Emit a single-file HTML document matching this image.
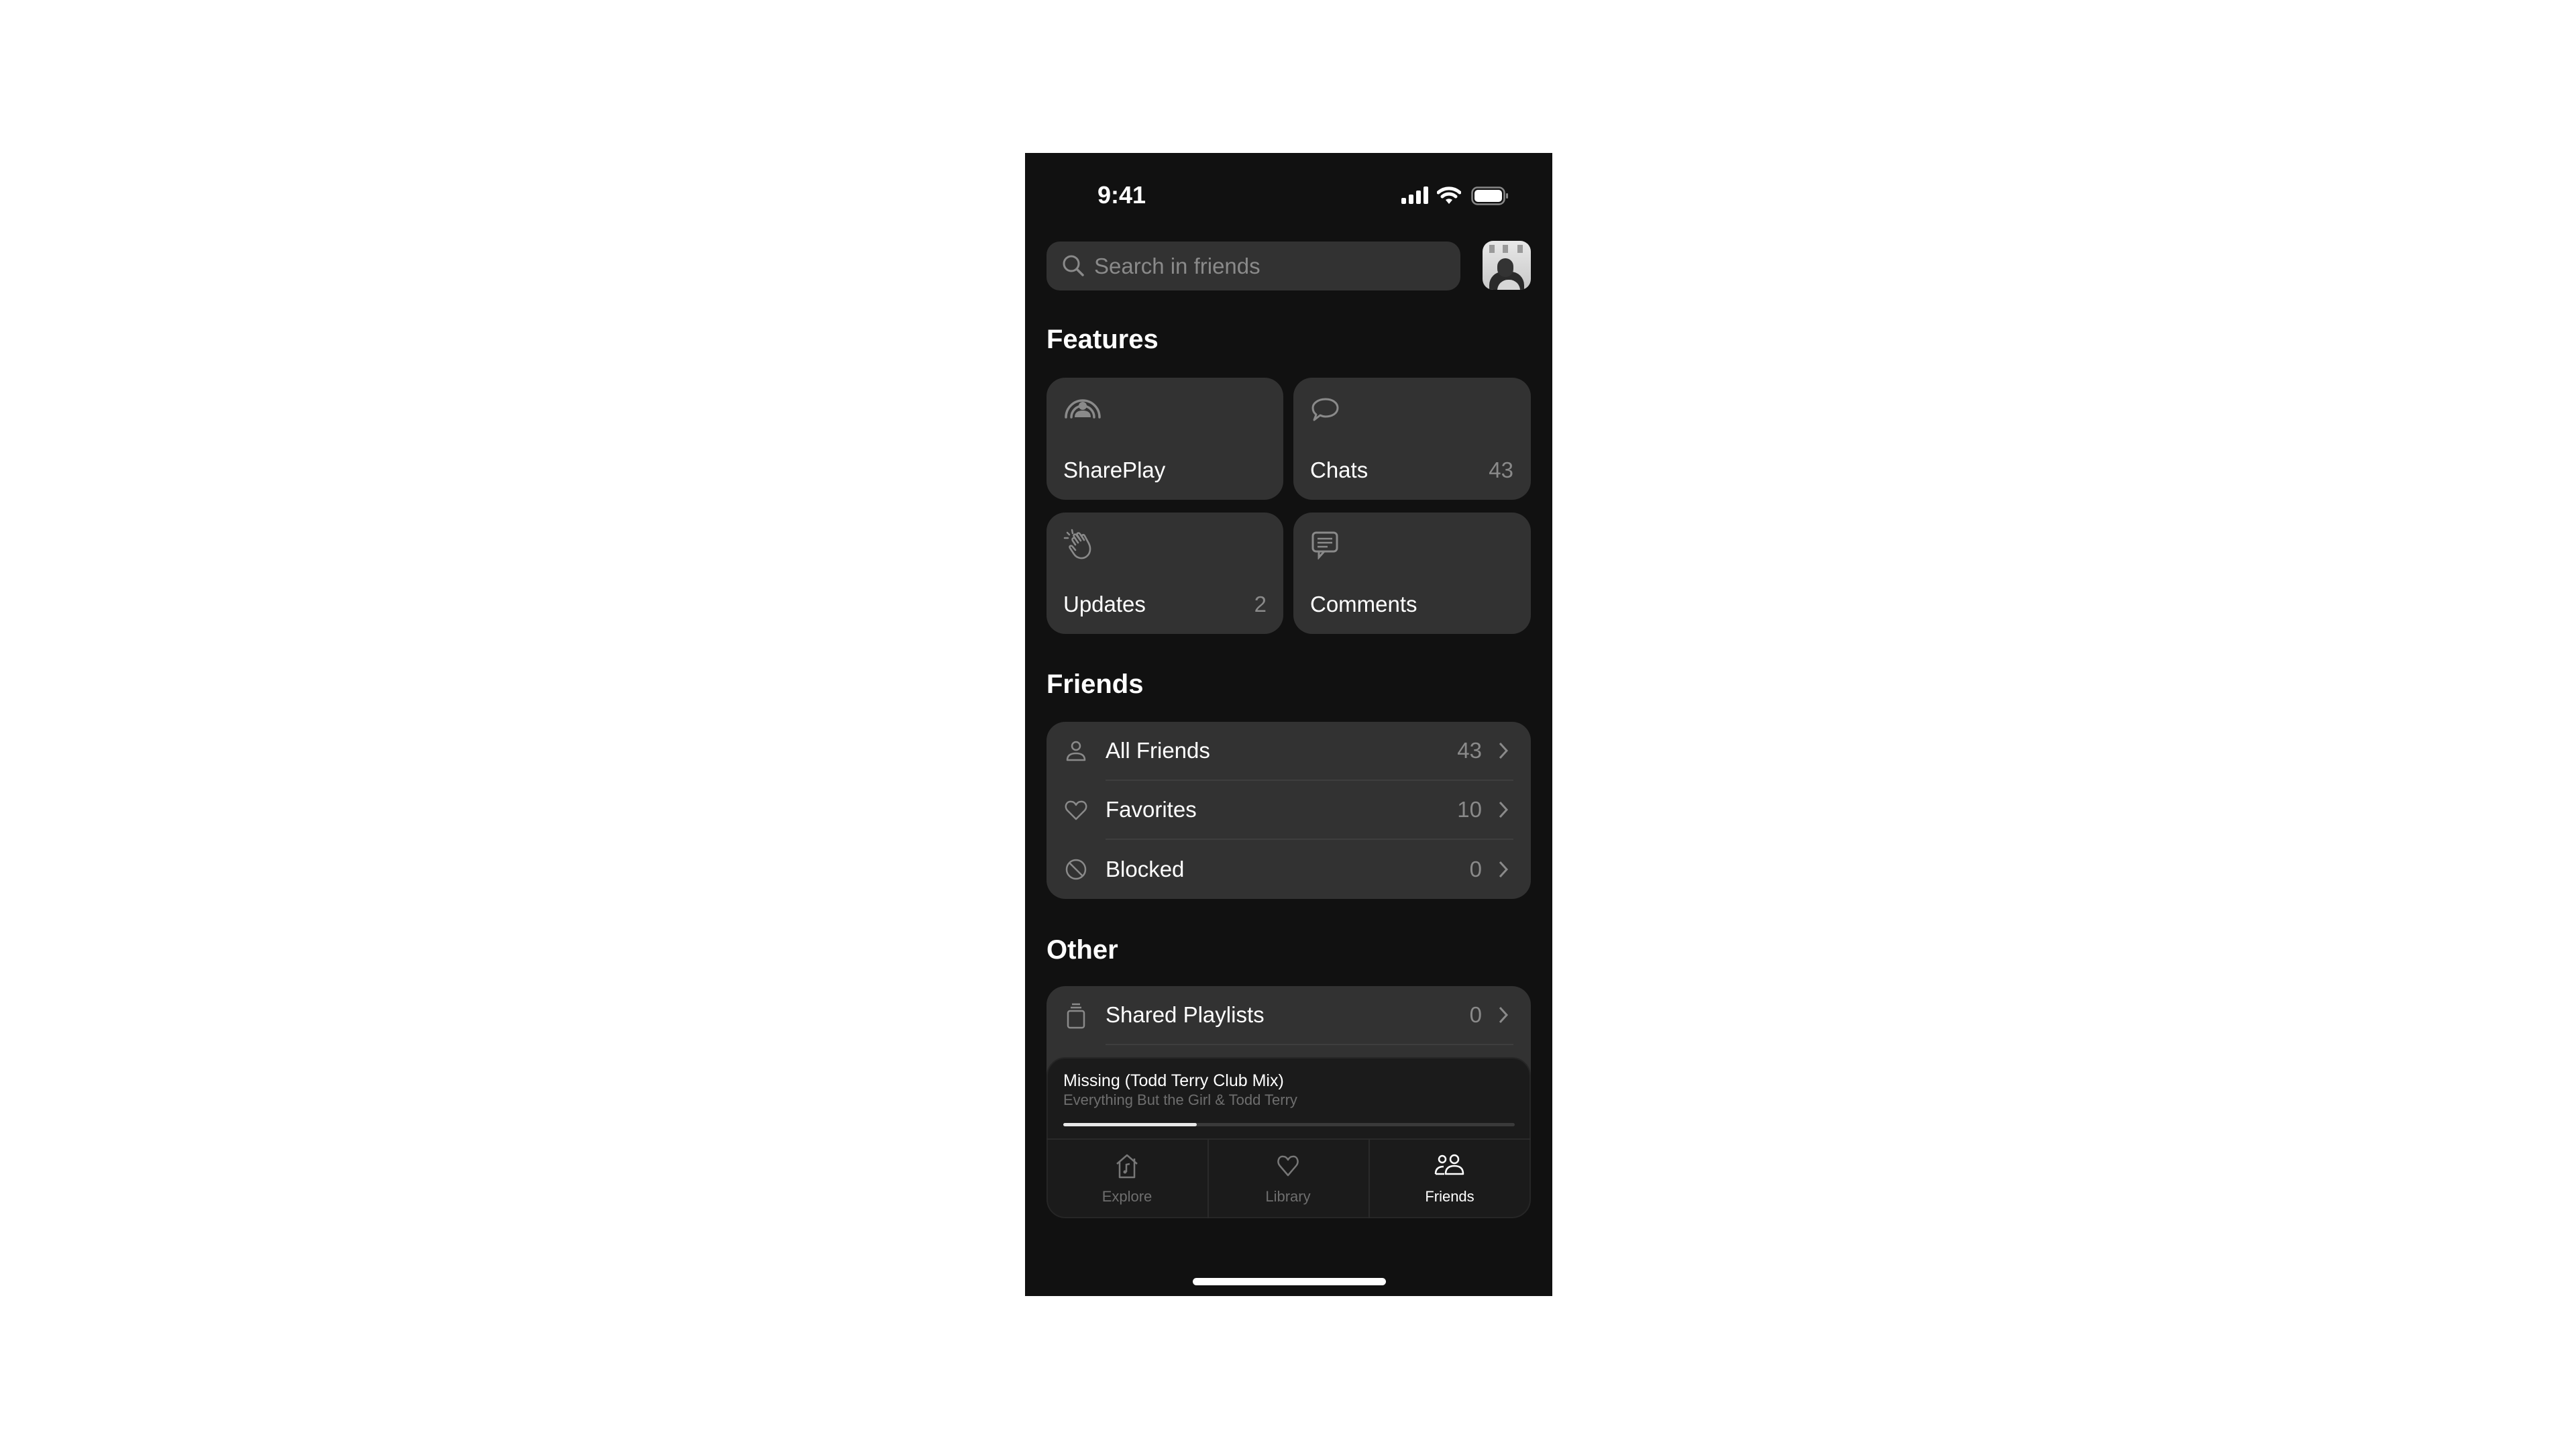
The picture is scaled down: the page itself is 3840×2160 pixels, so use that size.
<!DOCTYPE html>
<html><head><meta charset="utf-8"><style>
*{margin:0;padding:0;box-sizing:border-box}
body{width:3840px;height:2160px;background:#fff;position:relative;overflow:hidden;font-family:"Liberation Sans",sans-serif}
.ph{position:absolute;left:1528px;top:228px;width:786px;height:1704px;background:#111;overflow:hidden}
.a{position:absolute}
.t{position:absolute;white-space:nowrap;line-height:1}
.card{position:absolute;background:#323232;border-radius:28px}
.h{font-size:40px;font-weight:bold;color:#fff;left:32px}
.lbl{font-size:33px;color:#fff}
.cnt{font-size:33px;color:#8a8a8a}
.sep{position:absolute;height:2px;background:#3e3e3e}
</style></head><body>
<div class="ph">
 <div class="t" style="left:108px;top:45px;font-size:36px;font-weight:bold;color:#fff">9:41</div>
 <svg class="a" style="left:561px;top:50px" width="40" height="26"><rect x="0" y="17" width="7" height="9" rx="2" fill="#fff"/><rect x="11" y="12" width="7" height="14" rx="2" fill="#fff"/><rect x="22" y="6" width="7" height="20" rx="2" fill="#fff"/><rect x="33" y="0" width="7" height="26" rx="2" fill="#fff"/></svg>
 <svg class="a" style="left:614px;top:49px" width="36" height="28" viewBox="0 0 36 28"><path d="M2 10 A24 24 0 0 1 34 10" stroke="#fff" stroke-width="5" fill="none" stroke-linecap="round"/><path d="M8 16 A15 15 0 0 1 28 16" stroke="#fff" stroke-width="5" fill="none" stroke-linecap="round"/><path d="M13 21 L18 27 L23 21 A8 8 0 0 0 13 21Z" fill="#fff"/></svg>
 <svg class="a" style="left:665px;top:50px" width="56" height="28"><rect x="1.5" y="1.5" width="48" height="25" rx="8" stroke="#888" stroke-width="2.5" fill="none"/><rect x="5" y="5" width="41" height="18" rx="5" fill="#fff"/><rect x="52" y="10" width="3" height="8" rx="1.5" fill="#888"/></svg>
 <div class="card" style="left:32px;top:132px;width:617px;height:73px;border-radius:20px"></div>
 <svg class="a" style="left:54px;top:150px" width="36" height="36" viewBox="0 0 36 36"><circle cx="15" cy="15" r="11" stroke="#8a8a8a" stroke-width="3" fill="none"/><path d="M23 23 L32 32" stroke="#8a8a8a" stroke-width="3.5" stroke-linecap="round"/></svg>
 <div class="t" style="left:103px;top:152px;font-size:33px;color:#8a8a8a">Search in friends</div>
 <div class="a" style="left:682px;top:131px;width:72px;height:73px;border-radius:16px;overflow:hidden;background:linear-gradient(#e8e8e8,#c8c8c8)">
  <div class="a" style="left:10px;top:6px;width:8px;height:12px;background:#9a9a9a"></div>
  <div class="a" style="left:30px;top:6px;width:8px;height:12px;background:#9a9a9a"></div>
  <div class="a" style="left:52px;top:6px;width:8px;height:12px;background:#9a9a9a"></div>
  <div class="a" style="left:10px;top:46px;width:52px;height:34px;border-radius:20px 20px 0 0;background:#2a2a2a"></div>
  <div class="a" style="left:22px;top:58px;width:34px;height:20px;border-radius:16px 16px 0 0;background:#d6d6d6"></div>
  <div class="a" style="left:22px;top:26px;width:24px;height:28px;border-radius:12px;background:#333"></div>
 </div>
 <div class="t h" style="top:258px">Features</div>
 <div class="card" style="left:32px;top:335px;width:353px;height:182px"></div>
 <div class="card" style="left:400px;top:335px;width:354px;height:182px"></div>
 <div class="card" style="left:32px;top:536px;width:353px;height:181px"></div>
 <div class="card" style="left:400px;top:536px;width:354px;height:181px"></div>
 <svg class="a" style="left:58px;top:362px" width="56" height="34" viewBox="0 0 56 34"><path d="M3 32 A25 25 0 0 1 53 32" stroke="#8a8a8a" stroke-width="3.5" fill="none" stroke-linecap="round"/><path d="M11 32 A17 17 0 0 1 45 32" stroke="#8a8a8a" stroke-width="3.5" fill="none" stroke-linecap="round"/><circle cx="28" cy="15" r="6" fill="#8a8a8a"/><path d="M16 32 Q16 22 28 22 Q40 22 40 32Z" fill="#8a8a8a"/></svg>
 <svg class="a" style="left:426px;top:364px" width="44" height="40" viewBox="0 0 44 40"><path d="M22 3 C33 3 40 9 40 16 C40 24 32 29 22 29 C19 29 16 28 14 27 L5 34 L8 26 C4 23 3 19 3 16 C3 9 11 3 22 3Z" stroke="#8a8a8a" stroke-width="3" fill="none" stroke-linejoin="round"/></svg>
 <svg class="a" style="left:57px;top:560px" width="52" height="48" viewBox="0 0 52 48"><path d="M6 6 L9 9 M13 2 L14 7 M2 14 L7 14" stroke="#8a8a8a" stroke-width="2.5" stroke-linecap="round"/><path d="M18 24 L14 18 C12 15 16 12 18 15 L22 21 M22 21 L16 12 C14 9 18 7 20 10 L26 18 M26 18 L21 10 C19 7 23 5 25 8 L31 17 M31 17 L28 12 C27 9 31 8 32 11 L38 22 C42 30 40 38 34 42 C28 46 20 44 16 38 L10 29 C8 26 12 24 14 27 L18 32" stroke="#8a8a8a" stroke-width="2.6" fill="none" stroke-linecap="round" stroke-linejoin="round"/></svg>
 <svg class="a" style="left:427px;top:564px" width="42" height="42" viewBox="0 0 42 42"><rect x="2" y="2" width="36" height="28" rx="5" stroke="#8a8a8a" stroke-width="3" fill="none"/><path d="M9 11 H31 M9 17 H31 M9 23 H24" stroke="#8a8a8a" stroke-width="2.5"/><path d="M11 30 L11 39 L19 30" stroke="#8a8a8a" stroke-width="3" fill="none"/></svg>
 <div class="t lbl" style="left:57px;top:456px">SharePlay</div>
 <div class="t lbl" style="left:425px;top:456px">Chats</div>
 <div class="t cnt" style="right:58px;top:456px">43</div>
 <div class="t lbl" style="left:57px;top:656px">Updates</div>
 <div class="t cnt" style="right:426px;top:656px">2</div>
 <div class="t lbl" style="left:425px;top:656px">Comments</div>
 <div class="t h" style="top:772px">Friends</div>
 <div class="card" style="left:32px;top:848px;width:722px;height:264px"></div>
 <div class="sep" style="left:120px;top:934px;width:608px"></div>
 <div class="sep" style="left:120px;top:1022px;width:608px"></div>
 <svg class="a" style="left:58px;top:874px" width="36" height="36" viewBox="0 0 36 36"><circle cx="18" cy="10" r="6" stroke="#8a8a8a" stroke-width="2.5" fill="none"/><path d="M5 31 Q5 21 18 21 Q31 21 31 31 Z" stroke="#8a8a8a" stroke-width="2.5" fill="none" stroke-linejoin="round"/></svg>
 <svg class="a" style="left:58px;top:962px" width="36" height="36" viewBox="0 0 36 36"><path d="M18 31 L5 18 C0 12 4 4 11 5 C15 5 17 8 18 10 C19 8 21 5 25 5 C32 4 36 12 31 18 Z" stroke="#8a8a8a" stroke-width="2.5" fill="none" stroke-linejoin="round"/></svg>
 <svg class="a" style="left:58px;top:1050px" width="36" height="36" viewBox="0 0 36 36"><circle cx="18" cy="18" r="14" stroke="#8a8a8a" stroke-width="2.5" fill="none"/><path d="M8 8 L28 28" stroke="#8a8a8a" stroke-width="2.5"/></svg>
 <div class="t lbl" style="left:120px;top:874px">All Friends</div>
 <div class="t lbl" style="left:120px;top:962px">Favorites</div>
 <div class="t lbl" style="left:120px;top:1051px">Blocked</div>
 <div class="t cnt" style="right:105px;top:874px">43</div>
 <div class="t cnt" style="right:105px;top:962px">10</div>
 <div class="t cnt" style="right:105px;top:1051px">0</div>
 <svg class="a" style="left:704px;top:877px" width="18" height="28"><path d="M4 3 L14 14 L4 25" stroke="#8a8a8a" stroke-width="3" fill="none"/></svg>
 <svg class="a" style="left:704px;top:965px" width="18" height="28"><path d="M4 3 L14 14 L4 25" stroke="#8a8a8a" stroke-width="3" fill="none"/></svg>
 <svg class="a" style="left:704px;top:1054px" width="18" height="28"><path d="M4 3 L14 14 L4 25" stroke="#8a8a8a" stroke-width="3" fill="none"/></svg>
 <div class="t h" style="top:1168px">Other</div>
 <div class="card" style="left:32px;top:1242px;width:722px;height:200px"></div>
 <div class="sep" style="left:120px;top:1328px;width:608px"></div>
 <svg class="a" style="left:58px;top:1266px" width="36" height="40" viewBox="0 0 36 40"><rect x="6" y="13" width="24" height="25" rx="3" stroke="#8a8a8a" stroke-width="2.5" fill="none"/><path d="M10 8 H26 M12 3 H24" stroke="#8a8a8a" stroke-width="2.5"/></svg>
 <div class="t lbl" style="left:120px;top:1268px">Shared Playlists</div>
 <div class="t cnt" style="right:105px;top:1268px">0</div>
 <svg class="a" style="left:704px;top:1271px" width="18" height="28"><path d="M4 3 L14 14 L4 25" stroke="#8a8a8a" stroke-width="3" fill="none"/></svg>
 <div class="a" style="left:32px;top:1348px;width:722px;height:240px;background:#1b1b1b;border-radius:28px;border:2px solid #262626"></div>
 <div class="t" style="left:57px;top:1371px;font-size:25px;color:#fff">Missing (Todd Terry Club Mix)</div>
 <div class="t" style="left:57px;top:1401px;font-size:22px;color:#6e6e6e">Everything But the Girl &amp; Todd Terry</div>
 <div class="a" style="left:57px;top:1446px;width:673px;height:5px;border-radius:3px;background:#3a3a3a"></div>
 <div class="a" style="left:57px;top:1446px;width:199px;height:5px;border-radius:3px;background:#e8e8e8"></div>
 <div class="a" style="left:32px;top:1469px;width:722px;height:2px;background:#2a2a2a"></div>
 <div class="a" style="left:272px;top:1471px;width:2px;height:117px;background:#2a2a2a"></div>
 <div class="a" style="left:512px;top:1471px;width:2px;height:117px;background:#2a2a2a"></div>
 <svg class="a" style="left:132px;top:1490px" width="40" height="40" viewBox="0 0 40 40"><path d="M5 17 L20 4 L35 17 M9 14 V37 H31 V14 M31 9 V14" stroke="#777" stroke-width="2.5" fill="none" stroke-linejoin="round"/><path d="M19 29 V18 L24 17" stroke="#777" stroke-width="2.5" fill="none"/><circle cx="17" cy="29" r="2.5" fill="#777"/></svg>
 <svg class="a" style="left:374px;top:1492px" width="36" height="36" viewBox="0 0 36 36"><path d="M18 32 L6 18 C1 12 4 3 11 4 C15 4 17 7 18 9 C19 7 21 4 25 4 C32 3 35 12 30 18 Z" stroke="#777" stroke-width="2.5" fill="none" stroke-linejoin="round"/></svg>
 <svg class="a" style="left:610px;top:1492px" width="46" height="36" viewBox="0 0 46 36"><circle cx="12" cy="8" r="5" stroke="#fff" stroke-width="2.5" fill="none"/><circle cx="30" cy="8" r="6" stroke="#fff" stroke-width="2.5" fill="none"/><path d="M2 30 Q2 19 14 19 M17 30 Q17 18 30 18 Q43 18 43 30 Z M2 30 H15" stroke="#fff" stroke-width="2.5" fill="none" stroke-linejoin="round"/></svg>
 <div class="t" style="left:32px;width:240px;text-align:center;top:1545px;font-size:22px;color:#6e6e6e">Explore</div>
 <div class="t" style="left:272px;width:240px;text-align:center;top:1545px;font-size:22px;color:#6e6e6e">Library</div>
 <div class="t" style="left:512px;width:242px;text-align:center;top:1545px;font-size:22px;color:#fff">Friends</div>
 <div class="a" style="left:250px;top:1677px;width:288px;height:11px;border-radius:6px;background:#fff"></div>
</div>
</body></html>
